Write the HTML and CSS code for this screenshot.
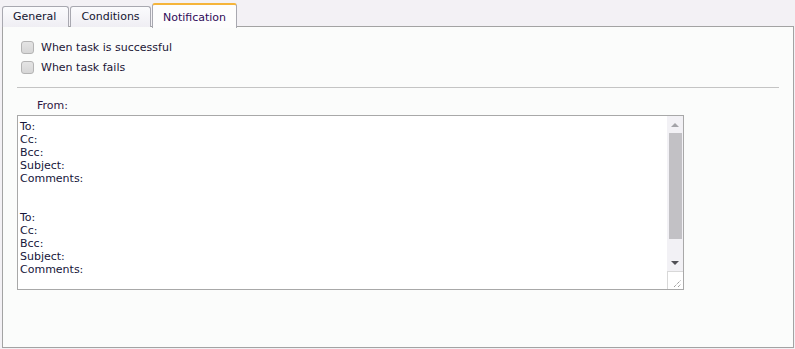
FILE: index.html
```
<!DOCTYPE html>
<html>
<head>
<meta charset="utf-8">
<link rel="stylesheet" href="styles.css">
</head>
<body>
<div class="tabs">
  <div class="tab">General</div>
  <div class="tab">Conditions</div>
  <div class="tab active">Notification</div>
</div>
<div class="panel">
  <div class="checks">
    <label class="check"><span class="box"></span>When task is successful</label>
    <label class="check"><span class="box"></span>When task fails</label>
  </div>
  <div class="sep"></div>
  <div class="from">From:</div>
  <div class="textbox">
    <div class="content">To:<br>Cc:<br>Bcc:<br>Subject:<br>Comments:<br><br><br>To:<br>Cc:<br>Bcc:<br>Subject:<br>Comments:<br><br></div>
    <div class="scroll">
      <div class="arrow up"></div>
      <div class="track"><div class="thumb"></div></div>
      <div class="arrow down"></div>
      <div class="corner">
        <svg width="16" height="17" viewBox="0 0 16 17"><path d="M6 15 L13 8 M10 15 L13 12" stroke="#777" stroke-width="1" stroke-dasharray="1 1" fill="none"/></svg>
      </div>
    </div>
  </div>
</div>
</body>
</html>
```
FILE: styles.css
```
html, body {
  margin: 0;
  padding: 0;
}
body {
  background: #f3f1f5;
  font-family: "DejaVu Sans", Verdana, sans-serif;
  font-size: 11px;
  color: #1e1e30;
  width: 795px;
  height: 349px;
  overflow: hidden;
}
.tabs {
  display: flex;
  align-items: flex-end;
  gap: 1px;
  padding-left: 2px;
  height: 27px;
  position: relative;
  z-index: 1;
}
.tab {
  box-sizing: border-box;
  height: 21px;
  padding: 3px 10px 0 10px;
  border: 1px solid #a8a8b0;
  border-bottom: none;
  border-radius: 3px 3px 0 0;
  background: linear-gradient(#fbfbfd, #efeef3);
  color: #141430;
  line-height: 14px;
}
.tab:nth-child(1) { width: 67px; }
.tab:nth-child(2) { width: 81px; text-align: center; padding: 3px 0 0 0; }
.tab.active {
  width: 85px;
  height: 25px;
  padding: 6px 0 0 0;
  text-align: center;
  background: #fdfdfd;
  border-top: 2px solid #f5b43a;
  margin-bottom: -1px;
  color: #300a58;
}
.panel {
  box-sizing: border-box;
  margin: -1px 1px 0 2px;
  height: 322px;
  border: 1px solid #a3a3a3;
  background: #fbfcfb;
  padding: 14px 14px 0 14px;
}
.checks {
  display: flex;
  flex-direction: column;
  gap: 7px;
  padding-left: 4px;
}
.check {
  display: flex;
  align-items: center;
  height: 13px;
  gap: 7px;
  color: #221636;
}
.box {
  box-sizing: border-box;
  width: 13px;
  height: 13px;
  border: 1px solid #b4b4b4;
  border-radius: 3px;
  background: linear-gradient(#e4e4e4, #d6d6d6);
}
.sep {
  margin: 13px 0 0 0;
  height: 1px;
  background: #c4c4c4;
  width: 762px;
}
.from {
  padding: 11px 0 0 20px;
  line-height: 13px;
  color: #301844;
}
.textbox {
  margin-top: 3px;
  box-sizing: border-box;
  width: 667px;
  height: 175px;
  border: 1px solid #a8a8a8;
  background: #ffffff;
  display: flex;
}
.content {
  flex: 1;
  padding: 4px 2px 0 2px;
  line-height: 13px;
  color: #16163a;
  overflow: hidden;
}
.scroll {
  width: 16px;
  display: flex;
  flex-direction: column;
  background: #f2f1f5;
}
.arrow {
  height: 17px;
  display: flex;
  align-items: center;
  justify-content: center;
}
.arrow.up::before {
  content: "";
  border-left: 4px solid transparent;
  border-right: 4px solid transparent;
  border-bottom: 4px solid #a3a3a8;
}
.arrow.down::before {
  content: "";
  border-left: 4px solid transparent;
  border-right: 4px solid transparent;
  border-top: 4px solid #505055;
}
.track {
  flex: 1;
  padding: 0 1px 0 2px;
}
.thumb {
  height: 106px;
  background: #c2c1c5;
}
.corner {
  height: 17px;
  background: #ffffff;
  border-top: 1px solid #d8d8d8;
  border-left: 1px solid #d8d8d8;
}
.corner svg {
  display: block;
}
```
